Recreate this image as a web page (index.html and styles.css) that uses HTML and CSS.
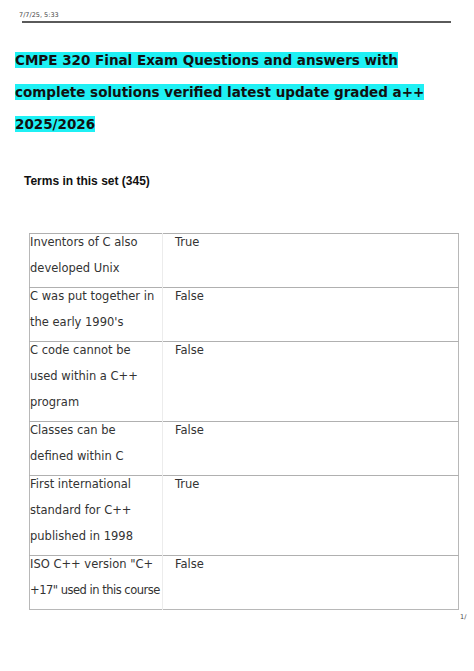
FILE: index.html
```html
<!DOCTYPE html>
<html>
<head>
<meta charset="utf-8">
<link rel="stylesheet" href="styles.css">
</head>
<body>
<div class="page">
  <header class="top">
    <div class="stamp">7/7/25, 5:33</div>
    <div class="rule"></div>
  </header>
  <h1 class="title"><span class="hl">CMPE 320 Final Exam Questions and answers with complete solutions verified latest update graded a++ 2025/2026</span></h1>
  <h2 class="terms">Terms in this set (345)</h2>
  <table class="cards">
    <tr><td class="q"><div class="txt">Inventors of C also<br>developed Unix</div></td><td class="a"><div class="txt">True</div></td></tr>
    <tr><td class="q"><div class="txt">C was put together in<br>the early 1990's</div></td><td class="a"><div class="txt">False</div></td></tr>
    <tr><td class="q"><div class="txt">C code cannot be<br>used within a C++<br>program</div></td><td class="a"><div class="txt">False</div></td></tr>
    <tr><td class="q"><div class="txt">Classes can be<br>defined within C</div></td><td class="a"><div class="txt">False</div></td></tr>
    <tr><td class="q"><div class="txt">First international<br>standard for C++<br>published in 1998</div></td><td class="a"><div class="txt">True</div></td></tr>
    <tr><td class="q"><div class="txt">ISO C++ version "C+<br><span class="tight">+17" used in this course</span></div></td><td class="a"><div class="txt">False</div></td></tr>
  </table>
  <div class="pagenum">1/</div>
</div>
</body>
</html>
```
FILE: styles.css
```css
html, body {
  margin: 0;
  padding: 0;
  background: #fff;
}
.page {
  font-family: "DejaVu Sans", sans-serif;
  color: #222;
}
.top {
  padding: 11px 0 0 19px;
}
.stamp {
  font-size: 6.5px;
  line-height: 8px;
  color: #444;
}
.rule {
  margin: 2px 0 0 3px;
  width: 429px;
  height: 0;
  border-top: 2px solid #5a5a5a;
}
.title {
  margin: 21px 0 0 15px;
  width: 440px;
  font-size: 13.5px;
  line-height: 32px;
  font-weight: bold;
  color: #111;
}
.hl {
  background: #1ff0f4;
}
.terms {
  margin: 33px 0 0 24px;
  font-family: "Liberation Sans", Arial, sans-serif;
  font-size: 12px;
  line-height: 16px;
  font-weight: bold;
  color: #111;
}
.cards {
  margin: 44px 0 0 29px;
  width: 430px;
  table-layout: fixed;
  border-collapse: collapse;
  border: 1px solid #b8b8b8;
}
.cards td {
  vertical-align: top;
  padding: 0 0 1px 0;
  border-top: 1px solid #b0b0b0;
  font-size: 11.5px;
  line-height: 26px;
  color: #333;
  white-space: nowrap;
}
.cards td.q {
  width: 132px;
  padding-left: 0;
  border-right: 1px solid #ececec;
}
.cards td.a {
  padding-left: 12px;
}
.tight {
  letter-spacing: -0.5px;
}
.txt {
  margin-top: -5px;
  margin-bottom: 5px;
}
.pagenum {
  margin: 3px 0 0 460px;
  font-size: 6.5px;
  line-height: 8px;
  color: #444;
}
```
